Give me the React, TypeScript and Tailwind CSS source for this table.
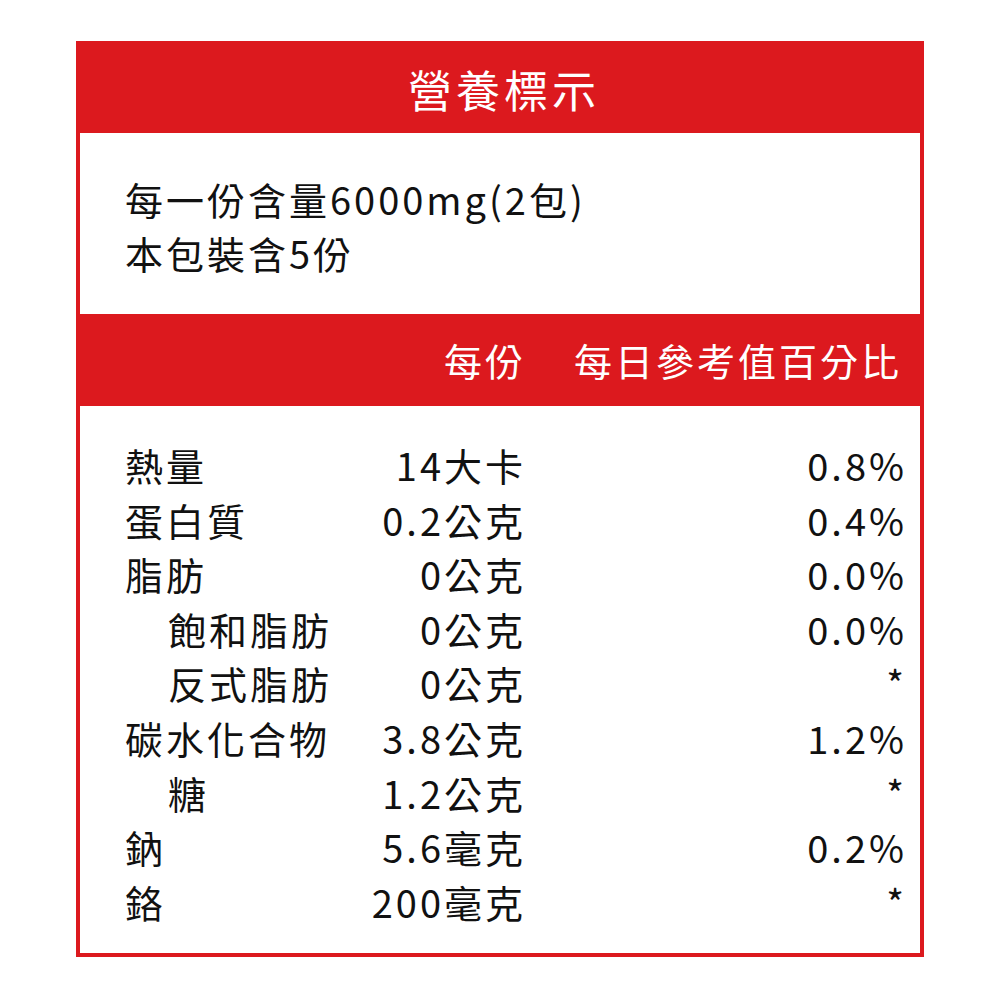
const rows: { label: string; indent?: boolean; amount: string; daily: string }[] = [
  { label: '熱量', amount: '14大卡', daily: '0.8%' },
  { label: '蛋白質', amount: '0.2公克', daily: '0.4%' },
  { label: '脂肪', amount: '0公克', daily: '0.0%' },
  { label: '飽和脂肪', indent: true, amount: '0公克', daily: '0.0%' },
  { label: '反式脂肪', indent: true, amount: '0公克', daily: '*' },
  { label: '碳水化合物', amount: '3.8公克', daily: '1.2%' },
  { label: '糖', indent: true, amount: '1.2公克', daily: '*' },
  { label: '鈉', amount: '5.6毫克', daily: '0.2%' },
  { label: '鉻', amount: '200毫克', daily: '*' },
]

export default function App() {
  return (
    <div className="w-[1000px] h-[1000px] bg-white pt-[41px] pl-[76px] font-['Noto_Sans_CJK_TC','Noto_Sans',sans-serif] text-[#111]">
      <div className="w-[848px] h-[916px] border-4 border-[#dc191e] flex flex-col">
        {/* 標題 */}
        <div className="shrink-0 h-[88px] bg-[#dc191e] flex items-center justify-center pl-[8px]">
          <h1 className="text-[44px] leading-none tracking-[4px] text-white">營養標示</h1>
        </div>

        {/* 份量 */}
        <div className="shrink-0 h-[181px] pl-[45px] pt-[39px] text-[38px] leading-[54px] tracking-[3px] whitespace-nowrap">
          <p>每一份含量6000mg(2包)</p>
          <p>本包裝含5份</p>
        </div>

        {/* 欄位標題 */}
        <div className="shrink-0 h-[92px] bg-[#dc191e] flex items-center pl-[45px] text-white text-[38px] leading-none tracking-[3px] whitespace-nowrap">
          <span className="w-[401px] text-right">每份</span>
          <span className="flex-1 text-right pr-[18px]">每日參考值百分比</span>
        </div>

        {/* 營養成分 */}
        <div className="flex-1 pl-[45px] pt-[32px] text-[38px] leading-[54.6px] tracking-[3px] whitespace-nowrap">
          {rows.map((r) => (
            <div key={r.label} className="flex">
              <div className="w-[401px] shrink-0 flex justify-between">
                <span className={r.indent ? 'pl-[43px]' : ''}>{r.label}</span>
                <span>{r.amount}</span>
              </div>
              <span className="flex-1 text-right pr-[13px]">{r.daily}</span>
            </div>
          ))}
        </div>
      </div>
    </div>
  )
}
